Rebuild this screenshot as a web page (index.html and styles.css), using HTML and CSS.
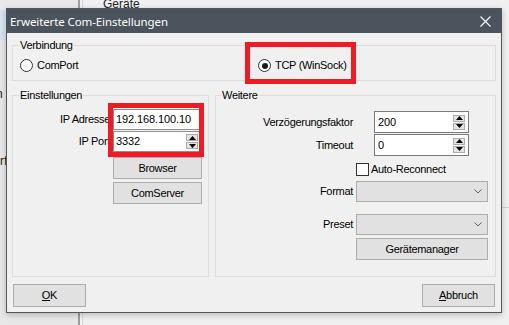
FILE: index.html
```html
<!DOCTYPE html>
<html lang="de">
<head>
<meta charset="utf-8">
<title>Erweiterte Com-Einstellungen</title>
<link rel="stylesheet" href="styles.css">
</head>
<body>
<div class="app">
  <div class="app-left">
    <div class="app-sel"></div>
    <span class="frag frag-n">n</span>
    <span class="frag frag-rf">rf</span>
  </div>
  <div class="app-split"></div>
  <div class="app-right">
    <div class="app-head">Geräte</div>
    <div class="app-row"></div>
  </div>
</div>

<div class="dialog">
  <div class="titlebar">
    <span class="title">Erweiterte Com-Einstellungen</span>
    <svg class="close" width="11" height="11" viewBox="0 0 11 11"><path d="M0.5 0.5L10.5 10.5M10.5 0.5L0.5 10.5" stroke="#fff" stroke-width="1.1" fill="none"/></svg>
  </div>
  <div class="dlg-body">
    <fieldset class="group group-conn">
      <legend>Verbindung</legend>
      <div class="radio-row">
        <label class="radio"><span class="radio-dot"></span>ComPort</label>
        <label class="radio checked"><span class="radio-dot"></span>TCP (WinSock)</label>
      </div>
    </fieldset>
    <div class="groups">
      <fieldset class="group group-settings">
        <legend>Einstellungen</legend>
        <div class="row">
          <span class="lbl">IP Adresse</span>
          <div class="textbox">192.168.100.10</div>
        </div>
        <div class="row row-port">
          <span class="lbl">IP Port</span>
          <div class="textbox">3332
            <span class="spin"><span class="spin-btn"><svg width="7" height="4" viewBox="0 0 7 4"><path d="M0 4L3.5 0L7 4Z"/></svg></span><span class="spin-btn"><svg width="7" height="4" viewBox="0 0 7 4"><path d="M0 0L7 0L3.5 4Z"/></svg></span></span>
          </div>
        </div>
        <div class="row row-browser">
          <span class="lbl"></span>
          <div class="btn btn-side">Browser</div>
        </div>
        <div class="row row-comserver">
          <span class="lbl"></span>
          <div class="btn btn-side">ComServer</div>
        </div>
      </fieldset>
      <fieldset class="group group-more">
        <legend>Weitere</legend>
        <div class="row row-delay">
          <span class="lbl">Verzögerungsfaktor</span>
          <div class="textbox spinbox">200
            <span class="spin"><span class="spin-btn"><svg width="7" height="4" viewBox="0 0 7 4"><path d="M0 4L3.5 0L7 4Z"/></svg></span><span class="spin-btn"><svg width="7" height="4" viewBox="0 0 7 4"><path d="M0 0L7 0L3.5 4Z"/></svg></span></span>
          </div>
        </div>
        <div class="row row-timeout">
          <span class="lbl">Timeout</span>
          <div class="textbox spinbox">0
            <span class="spin"><span class="spin-btn"><svg width="7" height="4" viewBox="0 0 7 4"><path d="M0 4L3.5 0L7 4Z"/></svg></span><span class="spin-btn"><svg width="7" height="4" viewBox="0 0 7 4"><path d="M0 0L7 0L3.5 4Z"/></svg></span></span>
          </div>
        </div>
        <div class="row row-check">
          <span class="lbl"></span>
          <label class="check"><span class="check-box"></span>Auto-Reconnect</label>
        </div>
        <div class="row row-format">
          <span class="lbl">Format</span>
          <div class="combo"><svg width="8" height="5" viewBox="0 0 8 5"><path d="M0.5 0.5L4 4L7.5 0.5" stroke="#606060" fill="none"/></svg></div>
        </div>
        <div class="row row-preset">
          <span class="lbl">Preset</span>
          <div class="combo"><svg width="8" height="5" viewBox="0 0 8 5"><path d="M0.5 0.5L4 4L7.5 0.5" stroke="#606060" fill="none"/></svg></div>
        </div>
        <div class="row row-manager">
          <span class="lbl"></span>
          <div class="btn btn-wide">Gerätemanager</div>
        </div>
      </fieldset>
    </div>
    <div class="footer">
      <div class="btn btn-foot"><u>O</u>K</div>
      <div class="btn btn-foot"><u>A</u>bbruch</div>
    </div>
  </div>
  <div class="mark mark-tcp"></div>
  <div class="mark mark-ip"></div>
</div>
</body>
</html>
```

FILE: styles.css
```css
* { box-sizing: border-box; }
html, body { margin: 0; padding: 0; }
body {
  width: 509px;
  height: 325px;
  overflow: hidden;
  position: relative;
  background: #ececec;
  font-family: "Liberation Sans", Arial, sans-serif;
  font-size: 11px;
  color: #000;
}

/* background application */
.app { display: flex; height: 325px; }
.app-left {
  width: 78px;
  background: #e8e8e8;
  display: flex;
  flex-direction: column;
  overflow: hidden;
}
.app-sel { height: 30px; margin-top: 10px; background: #d6e4f0; }
.frag { font-size: 12px; line-height: 14px; color: #222; }
.frag-n { margin-top: 47px; margin-left: -4px; }
.frag-rf { margin-top: 53px; margin-left: 0; }
.app-split {
  width: 5px;
  border-left: 2px solid #9d9d9d;
  border-right: 1px solid #d4d4d4;
  background: #f3f3f3;
}
.app-right { flex: 1; background: #f0f0f0; display: flex; flex-direction: column; }
.app-head {
  padding-left: 20px;
  margin-top: -3px;
  font-size: 12px;
  line-height: 14px;
  color: #222;
}
.app-row { height: 197px; border-bottom: 1px solid #cfcfcf; }

/* dialog window */
.dialog {
  position: absolute;
  left: 6px;
  top: 8px;
  width: 496px;
  height: 305px;
  background: #f0f0f0;
  border: 1px solid #4f575e;
  box-shadow: 0 2px 6px rgba(0, 0, 0, 0.22);
  display: flex;
  flex-direction: column;
}
.titlebar {
  height: 24px;
  flex: none;
  background: #4b545c;
  display: flex;
  align-items: center;
  padding-left: 3px;
  padding-right: 10px;
  color: #fff;
}
.title {
  font-family: "Noto Sans", "Open Sans", sans-serif;
  font-size: 11.5px;
  letter-spacing: -0.1px;
}
.close { margin-left: auto; }

.dlg-body {
  flex: 1;
  display: flex;
  flex-direction: column;
  padding: 6px 5px 5px;
  letter-spacing: -0.3px;
}

.group {
  margin: 0;
  border: 1px solid #dcdcdc;
  min-width: 0;
}
.group legend {
  padding: 0 1px;
  line-height: 13px;
  font-size: 11px;
}
.group-conn { padding: 7px 6px 8px; }
.radio-row {
  display: grid;
  grid-template-columns: 238px auto;
  height: 13px;
}
.radio {
  display: flex;
  align-items: center;
  gap: 4px;
  line-height: 13px;
  margin-left: 1px;
}
.radio-dot {
  width: 13px;
  height: 13px;
  border: 1px solid #333;
  border-radius: 50%;
  background: #fff;
  display: flex;
  align-items: center;
  justify-content: center;
}
.radio.checked .radio-dot::after {
  content: "";
  width: 6px;
  height: 6px;
  border-radius: 50%;
  background: #1a1a1a;
}

.groups {
  flex: 1;
  display: flex;
  gap: 6px;
  margin-top: 8px;
}
.group-settings { width: 197px; flex: none; padding: 7px 6px 0 6px; }
.group-more { flex: 1; padding: 9px 7px 0 5px; }

.row { display: flex; align-items: center; gap: 3px; }
.lbl { text-align: right; line-height: 13px; white-space: nowrap; flex: none; }
.group-settings .lbl { width: 91px; }
.group-more .lbl { width: 132px; }

.row-port { margin-top: 1px; }
.row-browser { margin-top: 5px; }
.row-comserver { margin-top: 3px; }

.textbox {
  position: relative;
  width: 89px;
  height: 21px;
  background: #fff;
  border: 1px solid #8f8f8f;
  padding-left: 2px;
  line-height: 19px;
  letter-spacing: -0.1px;
  display: flex;
  align-items: center;
}
.spinbox { width: 95px; height: 22px; margin-left: 18px; padding-left: 3px; border-color: #7a7a7a; }
.spin {
  margin-left: auto;
  margin-right: 3px;
  display: flex;
  flex-direction: column;
  gap: 1px;
}
.spin-btn {
  width: 12px;
  height: 7px;
  background: #e3e3e3;
  border: 1px solid #adadad;
  display: flex;
  align-items: center;
  justify-content: center;
}
.spin-btn svg { display: block; fill: #000; }

.btn {
  background: #e1e1e1;
  border: 1px solid #adadad;
  display: flex;
  align-items: center;
  justify-content: center;
  line-height: 13px;
}
.btn-side { width: 89px; height: 22px; }
.btn-wide { width: 132px; height: 22px; }

.row-timeout { margin-top: 1px; }
.row-check { margin-top: 7px; }
.row-format { margin-top: 5px; }
.row-preset { margin-top: 12px; }
.row-manager { margin-top: 3px; }

.check { display: flex; align-items: center; gap: 2px; line-height: 13px; }
.check-box { width: 13px; height: 13px; border: 1px solid #333; background: #fff; }

.combo {
  width: 132px;
  height: 21px;
  background: #e1e1e1;
  border: 1px solid #adadad;
  display: flex;
  align-items: center;
  justify-content: flex-end;
  padding-right: 5px;
}
.combo svg { display: block; }

.footer {
  display: flex;
  justify-content: space-between;
  margin-top: 7px;
  padding: 0 1px;
}
.btn-foot { width: 73px; height: 23px; }
.btn-foot u { text-decoration: underline; text-underline-offset: 1px; }

/* red annotation frames */
.mark {
  position: absolute;
  border: 5px solid #ed1c24;
  pointer-events: none;
}
.mark-tcp { left: 238px; top: 33px; width: 111px; height: 42px; }
.mark-ip { left: 101px; top: 94px; width: 96px; height: 54px; }
```
